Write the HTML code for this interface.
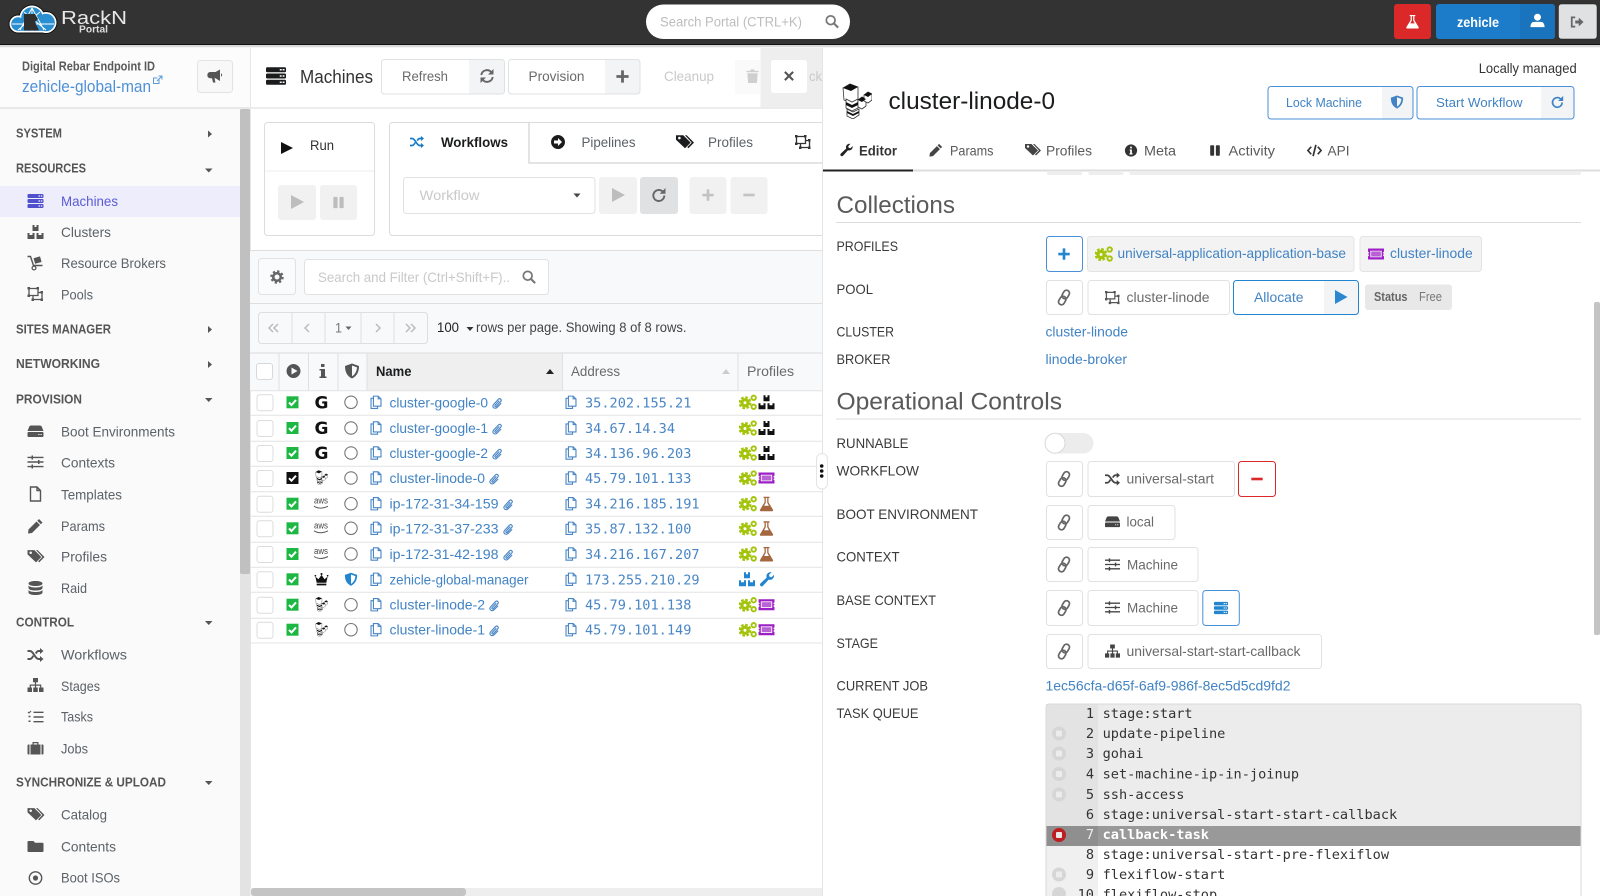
<!DOCTYPE html>
<html lang="en"><head><meta charset="utf-8"><title>RackN Portal - Machines</title>
<style>
html,body{margin:0;padding:0;background:#fff;width:1600px;height:896px;overflow:hidden}
svg{display:block;filter:blur(.3px)}
text{font-family:"Liberation Sans",sans-serif;font-size:14px;fill:#444;white-space:pre}
.h{font-size:13px;font-weight:bold;fill:#555}
.n{fill:#5c6268}
.a{fill:#4183c4}
.g{fill:#6a6a6a}
.p{fill:#c8c8c8}
.l{fill:#3a3a3a}
.m{font-family:"DejaVu Sans Mono",monospace;font-size:13.6px;fill:#333}
.r{font-family:"DejaVu Sans Mono",monospace;font-size:13.6px;fill:#4a86c5}
.t{font-size:24px;fill:#5a5a5a}
.b{fill:#fff;stroke:#e0e1e2;stroke-width:1}
.c{fill:#5a5a5a}
.gg{font-family:"DejaVu Sans",sans-serif;font-weight:bold;font-size:17px;fill:#111}
</style></head><body>
<svg width="1600" height="896" viewBox="0 0 1600 896" xmlns="http://www.w3.org/2000/svg">
<defs>
<symbol id="sv" viewBox="0 0 16 16"><path fill="currentColor" fill-rule="evenodd" d="M1 1h14a1 1 0 0 1 1 1v2a1 1 0 0 1-1 1H1a1 1 0 0 1-1-1V2a1 1 0 0 1 1-1zM11 2.4v1.2h1.5V2.4zM13.3 2.4v1.2h1.5V2.4zM1 6h14a1 1 0 0 1 1 1v2a1 1 0 0 1-1 1H1a1 1 0 0 1-1-1V7a1 1 0 0 1 1-1zM11 7.4v1.2h1.5V7.4zM13.3 7.4v1.2h1.5V7.4zM1 11h14a1 1 0 0 1 1 1v2a1 1 0 0 1-1 1H1a1 1 0 0 1-1-1v-2a1 1 0 0 1 1-1zM11 12.4v1.2h1.5v-1.2zM13.3 12.4v1.2h1.5v-1.2z"/></symbol>
<symbol id="cu" viewBox="0 0 16 16"><path fill="currentColor" d="M5 1h2v2h2V1h2v6H5zM0 9h2v2h3V9h2v6H0zM9 9h2v2h3V9h2v6H9z"/></symbol>
<symbol id="cart" viewBox="0 0 16 16"><path d="M0 1.5h3l3 9h9" fill="none" stroke="currentColor" stroke-width="1.4"/><path fill="currentColor" d="M6 3.2l6.5-1.8 1.6 5.6-6.5 1.8z"/><circle cx="6.5" cy="13" r="1.9" fill="none" stroke="currentColor" stroke-width="1.3"/></symbol>
<symbol id="ung" viewBox="0 0 16 16"><path d="M1.5 2.5h9v7h-9zM5.5 9.5v4h9v-7h-4" fill="none" stroke="currentColor" stroke-width="1.3"/><path fill="currentColor" d="M0 1h2.5v2.5H0zM9 1h2.500v2.500H9zM0 8.500h2.500V11H0zM13 5h2.500v2.500H13zM13 12.500h2.500V15H13zM4 12.500h2.500V15H4z"/></symbol>
<symbol id="hdd" viewBox="0 0 16 16"><path fill="currentColor" fill-rule="evenodd" d="M3.500 2.500h9c.8 0 1.500.5 1.800 1.200L16 8H0l1.700-4.300C2 3 2.700 2.500 3.500 2.500zM1 9h14a1 1 0 0 1 1 1v3a1 1 0 0 1-1 1H1a1 1 0 0 1-1-1v-3a1 1 0 0 1 1-1zM10.800 11v1h1.200v-1zM13 11v1h1.200v-1z"/></symbol>
<symbol id="sl" viewBox="0 0 16 16"><path fill="currentColor" d="M0 2.700h16v1.400H0zM0 7.300h16v1.400H0zM0 11.900h16v1.400H0zM4 1.500h1.500v4H4zM10.500 6H12v4h-1.500zM4 10.500h1.500v4H4z"/></symbol>
<symbol id="file" viewBox="0 0 16 16"><path d="M3 1h6.500L13 4.500V15H3zM9.500 1v3.500H13" fill="none" stroke="currentColor" stroke-width="1.400"/></symbol>
<symbol id="pen" viewBox="0 0 16 16"><path fill="currentColor" d="M11.500 1l3.500 3.500-1.700 1.700-3.500-3.500zM9 3.500L12.500 7l-8 8-4 .5L1 11.500z"/></symbol>
<symbol id="tags" viewBox="0 0 16 16"><path fill="currentColor" fill-rule="evenodd" d="M0 2h6.500L13 8.500 8 13.500 0 6zM3 3.300a1.200 1.200 0 1 0 .01 0zM8 2h1.500L16 8.500 11 13.500 10 12.500l4-4z"/></symbol>
<symbol id="db" viewBox="0 0 16 16"><path fill="currentColor" d="M8 1c4 0 7 1 7 2.500S12 6 8 6 1 5 1 3.500 4 1 8 1zM1 5.500c1 1.500 4 2 7 2s6-.5 7-2V8c0 1.500-3 2.500-7 2.500S1 9.500 1 8zM1 10c1 1.500 4 2 7 2s6-.5 7-2v2.500C15 14 12 15 8 15s-7-1-7-2.500z"/></symbol>
<symbol id="rand" viewBox="0 0 16 16"><path d="M0 4h2.500c3.500 0 5 8 8.500 8h2M0 12h2.500c1.500 0 2.500-1.700 3.300-3.300M8.300 6.500C9 5.200 9.800 4 11 4h2" fill="none" stroke="currentColor" stroke-width="1.900"/><path fill="currentColor" d="M12.500 1L16 4l-3.500 3zM12.500 9l3.500 3-3.500 3z"/></symbol>
<symbol id="site" viewBox="0 0 16 16"><path fill="currentColor" d="M5.500 1h5v4.300h-5zM0 10.500h4.500V15H0zM5.750 10.500h4.500V15h-4.500zM11.500 10.500H16V15h-4.500zM7.400 5h1.200v2.500h5.200v3h-1.200V8.700H8.600v1.800H7.400V8.700H3.400v1.800H2.200v-3h5.200z"/></symbol>
<symbol id="tasks" viewBox="0 0 16 16"><path fill="currentColor" d="M6 2.600h10V4H6zM6 7.300h10v1.400H6zM6 12h10v1.400H6zM1 11.500h2V13H1zM1 6.800h2v1.500H1z"/><path d="M.5 3l1 1L3.500 2" fill="none" stroke="currentColor" stroke-width="1.100"/></symbol>
<symbol id="suit" viewBox="0 0 16 16"><path fill="currentColor" d="M0 5.500a1 1 0 0 1 1-1h1v10H1a1 1 0 0 1-1-1zM3 4.500h10v10H3zM14 4.500h1a1 1 0 0 1 1 1v8a1 1 0 0 1-1 1h-1zM5 2h6v2.500H9.800V3.200H6.200v1.300H5z"/></symbol>
<symbol id="fold" viewBox="0 0 16 16"><path fill="currentColor" d="M1 3h5l1.500 1.800H15a1 1 0 0 1 1 1V13a1 1 0 0 1-1 1H1a1 1 0 0 1-1-1V4a1 1 0 0 1 1-1z"/></symbol>
<symbol id="dot" viewBox="0 0 16 16"><circle cx="8" cy="8" r="6.200" fill="none" stroke="currentColor" stroke-width="1.400"/><circle cx="8" cy="8" r="2.600" fill="currentColor"/></symbol>
<symbol id="horn" viewBox="0 0 16 16"><path fill="currentColor" d="M13 1.500v11.500L8.500 10.300H7.500L8.500 14.500H6L5 10.300H3A3.200 3.200 0 0 1 3 4h5.500zM14 5.200a2 2 0 0 1 0 3.600z"/></symbol>
<symbol id="sync" viewBox="0 0 16 16"><path d="M2.300 7a5.700 5.700 0 0 1 10-2.800M13.700 9a5.700 5.700 0 0 1-10 2.800" fill="none" stroke="currentColor" stroke-width="1.900"/><path fill="currentColor" d="M14.500 1v5.500H9zM1.500 15V9.500H7z"/></symbol>
<symbol id="plus" viewBox="0 0 16 16"><path fill="currentColor" d="M6.500 1.500h3v5h5v3h-5v5h-3v-5h-5v-3h5z"/></symbol>
<symbol id="min" viewBox="0 0 16 16"><path fill="currentColor" d="M1.500 6.500h13v3h-13z"/></symbol>
<symbol id="x" viewBox="0 0 16 16"><path fill="currentColor" d="M3.500 1.500L8 6l4.500-4.500 2 2L10 8l4.500 4.500-2 2L8 10l-4.500 4.500-2-2L6 8 1.500 3.500z"/></symbol>
<symbol id="play" viewBox="0 0 16 16"><path fill="currentColor" d="M2 1l13 7-13 7z"/></symbol>
<symbol id="pause" viewBox="0 0 16 16"><rect x="2.500" y="2" width="4.500" height="12" rx="1" fill="currentColor"/><rect x="9" y="2" width="4.500" height="12" rx="1" fill="currentColor"/></symbol>
<symbol id="redo" viewBox="0 0 16 16"><path d="M13.300 8.500a5.500 5.500 0 1 1-1.600-3.900" fill="none" stroke="currentColor" stroke-width="1.900"/><path fill="currentColor" d="M14.500 1v5.800H8.700z"/></symbol>
<symbol id="trash" viewBox="0 0 16 16"><path fill="currentColor" d="M1.500 2.500h4L6.200 1h3.600l.7 1.500h4V4h-13zM2.500 5h11l-.8 10.500H3.300z"/></symbol>
<symbol id="gear" viewBox="0 0 16 16"><circle cx="8" cy="8" r="4.300" fill="none" stroke="currentColor" stroke-width="3"/><circle cx="8" cy="8" r="6.600" fill="none" stroke="currentColor" stroke-width="2.200" stroke-dasharray="2.600 2.580"/></symbol>
<symbol id="sea" viewBox="0 0 16 16"><circle cx="6.500" cy="6.500" r="5" fill="none" stroke="currentColor" stroke-width="2"/><path d="M10 10l5 5" stroke="currentColor" stroke-width="2.400"/></symbol>
<symbol id="cogs" viewBox="0 0 18 16"><circle cx="6" cy="8.500" r="3.100" fill="none" stroke="currentColor" stroke-width="3.200"/><circle cx="6" cy="8.500" r="5.500" fill="none" stroke="currentColor" stroke-width="2" stroke-dasharray="2.700 1.620"/><circle cx="14.700" cy="3.500" r="2.200" fill="none" stroke="currentColor" stroke-width="1.900"/><circle cx="14.700" cy="12.500" r="2.200" fill="none" stroke="currentColor" stroke-width="1.900"/></symbol>
<symbol id="tick" viewBox="0 0 16 16"><path fill="currentColor" fill-rule="evenodd" d="M0 2.500h16v3.200a1 1 0 0 0 0 2v.6a1 1 0 0 0 0 2v3.200H0v-3.200a1 1 0 0 0 0-2v-.6a1 1 0 0 0 0-2zM2.300 4.700v6.600h11.400V4.700z"/><rect x="3.200" y="5.500" width="9.600" height="5" fill="currentColor" opacity=".7"/></symbol>
<symbol id="fl" viewBox="0 0 16 16"><path fill="currentColor" fill-rule="evenodd" d="M5 1h6v1.300h-1v4.200L14.500 14a1 1 0 0 1-.9 1.500H2.400a1 1 0 0 1-.9-1.500L6 6.500V2.300H5zM7.300 2.300v4.600L5.600 10h4.800L8.700 6.900V2.300z"/></symbol>
<symbol id="wr" viewBox="0 0 16 16"><path fill="currentColor" d="M15 4.500a4 4 0 0 1-5.300 3.800L4 14.500a1.700 1.700 0 0 1-2.500-2.400L7.700 6.300A4 4 0 0 1 12.500 1L10 3.500l.5 2 2 .5L15 3.500z"/></symbol>
<symbol id="clip" viewBox="0 0 16 16"><path d="M11 4.500L5.500 10.500c-1 1.200.5 2.500 1.500 1.500L13 5.500c2-2.200-1-5-3-3L3.500 9.500c-3 3.200 1.500 7 4.500 4L13.500 8" fill="none" stroke="currentColor" stroke-width="1.500"/></symbol>
<symbol id="copy" viewBox="0 0 14 16"><path d="M4 3.300H1.200v11.900H8.800v-2.600M4 .8h5.500L12.800 4v8.600H4zM9.500 .8V4h3.300" fill="none" stroke="currentColor" stroke-width="1.300"/></symbol>
<symbol id="link" viewBox="0 0 16 16"><g transform="rotate(-60 8 8)" fill="none" stroke="currentColor" stroke-width="1.600"><rect x="0.500" y="5.200" width="8.500" height="5.600" rx="2.800"/><rect x="7" y="5.200" width="8.500" height="5.600" rx="2.800"/></g></symbol>
<symbol id="shi" viewBox="0 0 16 16"><path fill="currentColor" fill-rule="evenodd" d="M8 .5L15 3c0 6-2 10-7 12.500C3 13 1 9 1 3zM8 2.500v10.800c3.300-2 4.700-5 5-8.900z"/></symbol>
<symbol id="inf" viewBox="0 0 16 16"><path fill="currentColor" fill-rule="evenodd" d="M8 1a7 7 0 1 0 .01 0zM7 3.500h2v2H7zM6.500 6.800H9v4.400h.8v1.300H6.300v-1.300H7V8.100h-.5z"/></symbol>
<symbol id="i" viewBox="0 0 16 16"><path fill="currentColor" d="M6 1h3.500v3H6zM4.500 6H10v7.500h1.500V15h-7v-1.500H6V7.500H4.500z"/></symbol>
<symbol id="code" viewBox="0 0 16 16"><path d="M4.500 4L1 8l3.500 4M11.500 4L15 8l-3.500 4M9.500 2L6.500 14" fill="none" stroke="currentColor" stroke-width="1.800"/></symbol>
<symbol id="usr" viewBox="0 0 16 16"><circle cx="8" cy="4.500" r="3.700" fill="currentColor"/><path fill="currentColor" d="M.5 15c0-4 2-5.500 4-5.500h7c2 0 4 1.500 4 5.500z"/></symbol>
<symbol id="out" viewBox="0 0 16 16"><path d="M6 2.700H2v10.600h4" fill="none" stroke="currentColor" stroke-width="2"/><path fill="currentColor" d="M6 6.300h4V3l5.500 5-5.500 5V9.700H6z"/></symbol>
<symbol id="pc" viewBox="0 0 16 16"><path fill="currentColor" fill-rule="evenodd" d="M8 1a7 7 0 1 0 .01 0zM6 4.500L12 8l-6 3.500z"/></symbol>
<symbol id="arr" viewBox="0 0 16 16"><path fill="currentColor" fill-rule="evenodd" d="M8 1a7 7 0 1 0 .01 0zM8 4l4 4-4 4V9.500H4v-3h4z"/></symbol>
<symbol id="crn" viewBox="0 0 16 16"><path fill="currentColor" d="M1 5l3.500 3L8 3l3.500 5L15 5l-1.500 7h-11zM2.500 13h11v2h-11z"/><circle cx="8" cy="2" r="1.200" fill="currentColor"/><circle cx="1" cy="4" r="1" fill="currentColor"/><circle cx="15" cy="4" r="1" fill="currentColor"/></symbol>
<symbol id="cb" viewBox="0 0 12 12"><path d="M2.500 6.200l2.500 2.500 4.500-5" fill="none" stroke="#fff" stroke-width="2"/></symbol>
<symbol id="cube" viewBox="0 0 30 36"><g fill="#fff" stroke="#333" stroke-width=".8"><path d="M1 5L8 1l8 3v12l-7 4-7-3z"/><path d="M4 16l6 3 6-3v9l-6 3-6-3z"/><path d="M5 26l6 3 6-3v6l-6 4-6-3z"/><path d="M16 17l4-3 4 2v7l-4 3-4-2z"/><path d="M22 12l4-3 4 2v6l-4 3-4-2z"/></g><path fill="#111" d="M1 5L8 1l8 3-7 4zM4 19l6 3 6-3v3l-6 3-6-3zM5 28l6 3 6-3v2l-6 3-6-3zM16 17l4-3 4 2-4 3zM22 12l4-3 4 2-4 3z"/></symbol>
<clipPath id="mc"><rect x="250" y="47" width="572" height="849"/></clipPath>
<clipPath id="cq"><rect x="1046" y="704" width="535" height="192"/></clipPath>
</defs>

<!-- page -->
<rect width="1600" height="896" fill="#fff"/>

<!-- sidebar -->
<rect x="0" y="44" width="250" height="852" fill="#fafafa"/>
<rect x="0" y="47" width="250" height="60" fill="#fcfcfc"/>
<rect x="0" y="107" width="250" height="2" fill="#e8e8e8"/>
<rect x="240" y="109" width="10" height="787" fill="#e3e3e3"/>
<rect x="240" y="109" width="10" height="465" rx="2" fill="#c0c0c0"/>
<text x="22" y="70.500" style="font-size:13px;font-weight:bold;fill:#5a5a5a" textLength="133" lengthAdjust="spacingAndGlyphs">Digital Rebar Endpoint ID</text>
<text x="22" y="92" class="a" style="font-size:17px;fill:#4f8fd6" textLength="129" lengthAdjust="spacingAndGlyphs">zehicle-global-man</text>
<g fill="none" stroke="#5b9bdc" stroke-width="1"><path d="M159 79.500v4h-5.500v-5.500h4"/><path d="M157 81l4.500-4.500M158.500 76h3.500v3.500"/></g>
<rect x="197.500" y="60.500" width="35" height="32" rx="3" fill="#f8f8f8" stroke="#e3e3e3"/>
<use href="#horn" x="207" y="68" width="16" height="16" color="#555"/>

<text class="h" x="16" y="137.500" textLength="46" lengthAdjust="spacingAndGlyphs">SYSTEM</text>
<path d="M208 130.500l4 3.500-4 3.500z" fill="#555"/>
<text class="h" x="16" y="172.500" textLength="70" lengthAdjust="spacingAndGlyphs">RESOURCES</text>
<path d="M205 168.500h7.500l-3.750 4z" fill="#555"/>
<rect x="0" y="186" width="240" height="31" fill="#eeedfb"/>
<use href="#sv" x="27.500" y="193" width="16" height="16" color="#5050cc"/>
<text x="61" y="206" style="fill:#5a5ad6" textLength="57" lengthAdjust="spacingAndGlyphs">Machines</text>
<use href="#cu" x="27.500" y="224" width="16" height="16" color="#555"/>
<text class="n" x="61" y="237" textLength="50" lengthAdjust="spacingAndGlyphs">Clusters</text>
<use href="#cart" x="27.500" y="255" width="16" height="16" color="#555"/>
<text class="n" x="61" y="268" textLength="105" lengthAdjust="spacingAndGlyphs">Resource Brokers</text>
<use href="#ung" x="27.500" y="286" width="16" height="16" color="#555"/>
<text class="n" x="61" y="299.300" textLength="32" lengthAdjust="spacingAndGlyphs">Pools</text>
<text class="h" x="16" y="333.500" textLength="95" lengthAdjust="spacingAndGlyphs">SITES MANAGER</text>
<path d="M208 326l4 3.500-4 3.500z" fill="#555"/>
<text class="h" x="16" y="368" textLength="84" lengthAdjust="spacingAndGlyphs">NETWORKING</text>
<path d="M208 361l4 3.500-4 3.500z" fill="#555"/>
<text class="h" x="16" y="403.500" textLength="66" lengthAdjust="spacingAndGlyphs">PROVISION</text>
<path d="M205 398h7.500l-3.750 4z" fill="#555"/>
<use href="#hdd" x="27.500" y="423" width="16" height="16" color="#555"/>
<text class="n" x="61" y="436.300" textLength="114" lengthAdjust="spacingAndGlyphs">Boot Environments</text>
<use href="#sl" x="27.500" y="454" width="16" height="16" color="#555"/>
<text class="n" x="61" y="467.300" textLength="54" lengthAdjust="spacingAndGlyphs">Contexts</text>
<use href="#file" x="27.500" y="486" width="16" height="16" color="#555"/>
<text class="n" x="61" y="499.300" textLength="61" lengthAdjust="spacingAndGlyphs">Templates</text>
<use href="#pen" x="27.500" y="518" width="16" height="16" color="#555"/>
<text class="n" x="61" y="531" textLength="44" lengthAdjust="spacingAndGlyphs">Params</text>
<use href="#tags" x="27.500" y="548" width="17" height="17" color="#555"/>
<text class="n" x="61" y="561.300" textLength="46" lengthAdjust="spacingAndGlyphs">Profiles</text>
<use href="#db" x="27.500" y="580" width="16" height="16" color="#555"/>
<text class="n" x="61" y="593" textLength="26" lengthAdjust="spacingAndGlyphs">Raid</text>
<text class="h" x="16" y="626.500" textLength="58" lengthAdjust="spacingAndGlyphs">CONTROL</text>
<path d="M205 621h7.500l-3.750 4z" fill="#555"/>
<use href="#rand" x="27.500" y="647" width="16" height="16" color="#555"/>
<text class="n" x="61" y="659.300" textLength="66" lengthAdjust="spacingAndGlyphs">Workflows</text>
<use href="#site" x="27.500" y="677" width="16" height="16" color="#555"/>
<text class="n" x="61" y="691" textLength="39" lengthAdjust="spacingAndGlyphs">Stages</text>
<use href="#tasks" x="27.500" y="709" width="16" height="16" color="#555"/>
<text class="n" x="61" y="721.300" textLength="32" lengthAdjust="spacingAndGlyphs">Tasks</text>
<use href="#suit" x="27.500" y="740" width="16" height="16" color="#555"/>
<text class="n" x="61" y="753.300" textLength="27" lengthAdjust="spacingAndGlyphs">Jobs</text>
<text class="h" x="16" y="786.500" textLength="150" lengthAdjust="spacingAndGlyphs">SYNCHRONIZE &amp; UPLOAD</text>
<path d="M205 781h7.500l-3.750 4z" fill="#555"/>
<use href="#tags" x="27.500" y="806" width="17" height="17" color="#555"/>
<text class="n" x="61" y="819.300" textLength="46" lengthAdjust="spacingAndGlyphs">Catalog</text>
<use href="#fold" x="27.500" y="838" width="16" height="16" color="#555"/>
<text class="n" x="61" y="851.300" textLength="55" lengthAdjust="spacingAndGlyphs">Contents</text>
<use href="#dot" x="27.500" y="870" width="16" height="16" color="#555"/>
<text class="n" x="61" y="882.300" textLength="59" lengthAdjust="spacingAndGlyphs">Boot ISOs</text>

<!-- main panel -->
<g clip-path="url(#mc)">
<rect x="250" y="47" width="572" height="849" fill="#fff"/>
<rect x="250" y="47" width="1" height="849" fill="#e6e6e6"/>
<rect x="250" y="107" width="572" height="2" fill="#ececec"/>
<use href="#sv" x="266" y="66" width="20" height="20" color="#1b1c1d"/>
<text x="300" y="83" style="font-size:18px;fill:#333" textLength="73" lengthAdjust="spacingAndGlyphs">Machines</text>
<path d="M469 60h32.500a2.500 2.500 0 0 1 2.500 2.500v29a2.500 2.500 0 0 1-2.500 2.500H469z" fill="#f3f4f5"/>
<rect x="381.500" y="59.500" width="123" height="34.500" rx="3" fill="none" stroke="#e0e1e2"/>
<text class="g" x="402" y="81" textLength="46" lengthAdjust="spacingAndGlyphs">Refresh</text>
<use href="#sync" x="479" y="68" width="16" height="16" color="#666"/>
<path d="M605 60h32.500a2.500 2.500 0 0 1 2.500 2.500v29a2.500 2.500 0 0 1-2.500 2.500H605z" fill="#f3f4f5"/>
<rect x="508.500" y="59.500" width="131.500" height="34.500" rx="3" fill="none" stroke="#e0e1e2"/>
<text class="g" x="528.500" y="81" textLength="56" lengthAdjust="spacingAndGlyphs">Provision</text>
<use href="#plus" x="615" y="69" width="15" height="15" color="#666"/>
<text x="664" y="81" style="fill:#c9c9c9" textLength="50" lengthAdjust="spacingAndGlyphs">Cleanup</text>
<rect x="735" y="60" width="25" height="34" fill="#fafafa"/>
<use href="#trash" x="745" y="68" width="15" height="16" color="#cfcfcf"/>
<rect x="760.500" y="47" width="61.500" height="60" fill="#eeeeee"/>
<rect x="771" y="60" width="36" height="33" rx="3" fill="#fff"/>
<use href="#x" x="783" y="70" width="12" height="12" color="#555"/>
<text x="809" y="81" style="fill:#c9c9c9" textLength="13" lengthAdjust="spacingAndGlyphs">ck</text>

<!-- run card -->
<rect x="264.500" y="122.500" width="110" height="113" rx="3" fill="#fff" stroke="#dcdcdc"/>
<path d="M265 171h109" stroke="#eee"/>
<path d="M281 142l12 6-12 6z" fill="#111"/>
<text x="310" y="150" style="fill:#333" textLength="24" lengthAdjust="spacingAndGlyphs">Run</text>
<rect x="278" y="185" width="38" height="35" rx="3" fill="#f1f1f1"/>
<use href="#play" x="289" y="194" width="16" height="16" color="#bdbdbd"/>
<rect x="320" y="185" width="37" height="35" rx="3" fill="#f1f1f1"/>
<use href="#pause" x="331" y="195" width="15" height="15" color="#bdbdbd"/>

<!-- tabs card -->
<rect x="389.500" y="122.500" width="460" height="113" rx="3" fill="#fff" stroke="#dcdcdc"/>
<path d="M529 122.500V163H822" fill="none" stroke="#dcdcdc" stroke-width="1.500"/>
<use href="#rand" x="410" y="135" width="14" height="14" color="#1a7cc9"/>
<text x="441" y="147.200" style="font-weight:bold;fill:#1b1c1d" textLength="67" lengthAdjust="spacingAndGlyphs">Workflows</text>
<use href="#arr" x="550" y="134" width="16" height="16" color="#1b1c1d"/>
<text class="n" x="581.500" y="147.200" textLength="54" lengthAdjust="spacingAndGlyphs">Pipelines</text>
<use href="#tags" x="676" y="133" width="18" height="18" color="#1b1c1d"/>
<text class="n" x="708" y="147.200" textLength="45" lengthAdjust="spacingAndGlyphs">Profiles</text>
<use href="#ung" x="795" y="134" width="16" height="16" color="#333"/>
<rect x="403.500" y="177.500" width="191.500" height="36" rx="3" fill="#fff" stroke="#e0e1e2"/>
<text x="419.500" y="200" style="fill:#c9c9c9" textLength="60" lengthAdjust="spacingAndGlyphs">Workflow</text>
<path d="M573.500 193.500h7l-3.500 4z" fill="#444"/>
<rect x="599" y="177" width="38" height="37" rx="3" fill="#f1f1f1"/>
<use href="#play" x="610" y="187" width="16" height="16" color="#bdbdbd"/>
<rect x="640" y="177" width="38" height="37" rx="3" fill="#e0e1e2"/>
<use href="#redo" x="651" y="187" width="16" height="16" color="#666"/>
<rect x="689.500" y="177" width="37" height="37" rx="3" fill="#f1f1f1"/>
<use href="#plus" x="701" y="188" width="14" height="14" color="#c3c3c3"/>
<rect x="730.500" y="177" width="37" height="37" rx="3" fill="#f1f1f1"/>
<use href="#min" x="742" y="188" width="14" height="14" color="#c3c3c3"/>

<!-- filter -->
<rect x="250" y="250" width="572" height="103" fill="#f8f9fb"/>
<rect x="250" y="250" width="572" height="1" fill="#dedede"/>
<rect x="250" y="303" width="572" height="1" fill="#dedede"/>
<rect x="258.500" y="258.500" width="37" height="36" rx="3" fill="#fafbfc" stroke="#e0e1e2"/>
<use href="#gear" x="270" y="270" width="14" height="14" color="#666"/>
<rect x="304.500" y="259.500" width="244" height="35" rx="3" fill="#fff" stroke="#e0e1e2"/>
<text x="318" y="282" style="fill:#c9c9c9" textLength="192" lengthAdjust="spacingAndGlyphs">Search and Filter (Ctrl+Shift+F)..</text>
<use href="#sea" x="522" y="270" width="14" height="14" color="#777"/>
<rect x="258.500" y="312.500" width="169" height="31" rx="3" fill="#f8f9fb" stroke="#dedede"/>
<path d="M292 313v30M325 313v30M361 313v30M394 313v30" stroke="#dedede"/>
<path d="M274 324l-4 4 4 4M279 324l-4 4 4 4M310 324l-4 4 4 4M377 324l4 4-4 4M407 324l4 4-4 4M412 324l4 4-4 4" fill="none" stroke="#bbb" stroke-width="1.500" transform="translate(-1 0)"/>
<text x="335" y="332.500" style="fill:#777" textLength="7" lengthAdjust="spacingAndGlyphs">1</text>
<path d="M345.500 326.500h6l-3 3.500z" fill="#666"/>
<text x="437" y="332.200" style="fill:#222" textLength="22" lengthAdjust="spacingAndGlyphs">100</text>
<path d="M466.500 327h7l-3.500 4z" fill="#333"/>
<text x="476" y="332.200" style="fill:#444" textLength="210.500" lengthAdjust="spacingAndGlyphs">rows per page. Showing 8 of 8 rows.</text>

<!-- table header -->
<rect x="250" y="353" width="572" height="38" fill="#f8f9fb"/>
<rect x="367" y="353" width="195.500" height="38" fill="#efefef"/>
<rect x="250" y="352.500" width="572" height="1" fill="#dcdcdc"/>
<path d="M279 353v38M308.500 353v38M338 353v38M367 353v38M562.500 353v38M738 353v38" stroke="#e0e0e0"/>
<rect x="256.500" y="363.500" width="16" height="16" rx="2.500" fill="#fff" stroke="#d8d8d8"/>
<use href="#pc" x="285.500" y="363" width="16" height="16" color="#555"/>
<use href="#i" x="315" y="363" width="16" height="16" color="#555"/>
<use href="#shi" x="344" y="363" width="16" height="16" color="#555"/>
<text x="376" y="376" style="font-weight:bold;fill:#1b1c1d" textLength="35.500" lengthAdjust="spacingAndGlyphs">Name</text>
<path d="M546 374l4-5 4 5z" fill="#222"/>
<text x="571" y="376" class="g" textLength="49" lengthAdjust="spacingAndGlyphs">Address</text>
<path d="M722 374l4-5 4 5z" fill="#ccc"/>
<text x="747" y="376" class="g" textLength="47" lengthAdjust="spacingAndGlyphs">Profiles</text>
<path d="M250 390.800H822M250 415.300H822M250 441.300H822M250 466.300H822M250 491.700H822M250 516.300H822M250 542.300H822M250 567.300H822M250 592.300H822M250 618.300H822M250 643H822" stroke="#e4e4e4" stroke-width="1"/>

<!-- rows -->
<g transform="translate(0 402.300)">
<rect x="257" y="-7.500" width="16" height="16" rx="2.500" fill="#fff" stroke="#dcdcdc"/><rect x="286.500" y="-6" width="12" height="12" fill="#1db843"/><use href="#cb" x="286.500" y="-6" width="12" height="12"/>
<text class="gg" x="314.500" y="6">G</text><circle cx="351" cy="0" r="6.200" fill="#fff" stroke="#777" stroke-width="1.100"/><use href="#copy" x="370" y="-7" width="12" height="14" color="#4a86c5"/>
<text class="a" x="389.500" y="5" textLength="98.500" lengthAdjust="spacingAndGlyphs">cluster-google-0</text><use href="#clip" x="491" y="-5" width="12" height="12" color="#4a86c5"/>
<use href="#copy" x="565" y="-7" width="12" height="14" color="#4a86c5"/><text class="r" x="585" y="5">35.202.155.21</text>
<use href="#cogs" x="739" y="-8" width="18" height="16" color="#a3c40a"/><use href="#cu" x="758.500" y="-8" width="16" height="16" color="#111"/></g>

<g transform="translate(0 428)">
<rect x="257" y="-7.500" width="16" height="16" rx="2.500" fill="#fff" stroke="#dcdcdc"/><rect x="286.500" y="-6" width="12" height="12" fill="#1db843"/><use href="#cb" x="286.500" y="-6" width="12" height="12"/>
<text class="gg" x="314.500" y="6">G</text><circle cx="351" cy="0" r="6.200" fill="#fff" stroke="#777" stroke-width="1.100"/><use href="#copy" x="370" y="-7" width="12" height="14" color="#4a86c5"/>
<text class="a" x="389.500" y="5" textLength="98.500" lengthAdjust="spacingAndGlyphs">cluster-google-1</text><use href="#clip" x="491" y="-5" width="12" height="12" color="#4a86c5"/>
<use href="#copy" x="565" y="-7" width="12" height="14" color="#4a86c5"/><text class="r" x="585" y="5">34.67.14.34</text>
<use href="#cogs" x="739" y="-8" width="18" height="16" color="#a3c40a"/><use href="#cu" x="758.500" y="-8" width="16" height="16" color="#111"/></g>

<g transform="translate(0 453)">
<rect x="257" y="-7.500" width="16" height="16" rx="2.500" fill="#fff" stroke="#dcdcdc"/><rect x="286.500" y="-6" width="12" height="12" fill="#1db843"/><use href="#cb" x="286.500" y="-6" width="12" height="12"/>
<text class="gg" x="314.500" y="6">G</text><circle cx="351" cy="0" r="6.200" fill="#fff" stroke="#777" stroke-width="1.100"/><use href="#copy" x="370" y="-7" width="12" height="14" color="#4a86c5"/>
<text class="a" x="389.500" y="5" textLength="98.500" lengthAdjust="spacingAndGlyphs">cluster-google-2</text><use href="#clip" x="491" y="-5" width="12" height="12" color="#4a86c5"/>
<use href="#copy" x="565" y="-7" width="12" height="14" color="#4a86c5"/><text class="r" x="585" y="5">34.136.96.203</text>
<use href="#cogs" x="739" y="-8" width="18" height="16" color="#a3c40a"/><use href="#cu" x="758.500" y="-8" width="16" height="16" color="#111"/></g>

<g transform="translate(0 478)">
<rect x="257" y="-7.500" width="16" height="16" rx="2.500" fill="#fff" stroke="#dcdcdc"/><rect x="286.500" y="-6" width="12" height="12" fill="#111"/><use href="#cb" x="286.500" y="-6" width="12" height="12"/>
<use href="#cube" x="315" y="-8" width="13" height="15"/><circle cx="351" cy="0" r="6.200" fill="#fff" stroke="#777" stroke-width="1.100"/><use href="#copy" x="370" y="-7" width="12" height="14" color="#4a86c5"/>
<text class="a" x="389.500" y="5" textLength="95.500" lengthAdjust="spacingAndGlyphs">cluster-linode-0</text><use href="#clip" x="488" y="-5" width="12" height="12" color="#4a86c5"/>
<use href="#copy" x="565" y="-7" width="12" height="14" color="#4a86c5"/><text class="r" x="585" y="5">45.79.101.133</text>
<use href="#cogs" x="739" y="-8" width="18" height="16" color="#a3c40a"/><use href="#tick" x="758.500" y="-8" width="16" height="16" color="#9b1fc4"/></g>

<g transform="translate(0 503.700)">
<rect x="257" y="-7.500" width="16" height="16" rx="2.500" fill="#fff" stroke="#dcdcdc"/><rect x="286.500" y="-6" width="12" height="12" fill="#1db843"/><use href="#cb" x="286.500" y="-6" width="12" height="12"/>
<text x="314" y="0" style="font-size:9px;fill:#444" textLength="14" lengthAdjust="spacingAndGlyphs">aws</text><path d="M314 2.500c4 2.500 9 2.500 14 0" fill="none" stroke="#555" stroke-width="1"/><circle cx="351" cy="0" r="6.200" fill="#fff" stroke="#777" stroke-width="1.100"/><use href="#copy" x="370" y="-7" width="12" height="14" color="#4a86c5"/>
<text class="a" x="389.500" y="5" textLength="109" lengthAdjust="spacingAndGlyphs">ip-172-31-34-159</text><use href="#clip" x="502" y="-5" width="12" height="12" color="#4a86c5"/>
<use href="#copy" x="565" y="-7" width="12" height="14" color="#4a86c5"/><text class="r" x="585" y="5">34.216.185.191</text>
<use href="#cogs" x="739" y="-8" width="18" height="16" color="#a3c40a"/><use href="#fl" x="758.500" y="-8" width="16" height="16" color="#a5673f"/></g>

<g transform="translate(0 528.300)">
<rect x="257" y="-7.500" width="16" height="16" rx="2.500" fill="#fff" stroke="#dcdcdc"/><rect x="286.500" y="-6" width="12" height="12" fill="#1db843"/><use href="#cb" x="286.500" y="-6" width="12" height="12"/>
<text x="314" y="0" style="font-size:9px;fill:#444" textLength="14" lengthAdjust="spacingAndGlyphs">aws</text><path d="M314 2.500c4 2.500 9 2.500 14 0" fill="none" stroke="#555" stroke-width="1"/><circle cx="351" cy="0" r="6.200" fill="#fff" stroke="#777" stroke-width="1.100"/><use href="#copy" x="370" y="-7" width="12" height="14" color="#4a86c5"/>
<text class="a" x="389.500" y="5" textLength="109" lengthAdjust="spacingAndGlyphs">ip-172-31-37-233</text><use href="#clip" x="502" y="-5" width="12" height="12" color="#4a86c5"/>
<use href="#copy" x="565" y="-7" width="12" height="14" color="#4a86c5"/><text class="r" x="585" y="5">35.87.132.100</text>
<use href="#cogs" x="739" y="-8" width="18" height="16" color="#a3c40a"/><use href="#fl" x="758.500" y="-8" width="16" height="16" color="#a5673f"/></g>

<g transform="translate(0 554)">
<rect x="257" y="-7.500" width="16" height="16" rx="2.500" fill="#fff" stroke="#dcdcdc"/><rect x="286.500" y="-6" width="12" height="12" fill="#1db843"/><use href="#cb" x="286.500" y="-6" width="12" height="12"/>
<text x="314" y="0" style="font-size:9px;fill:#444" textLength="14" lengthAdjust="spacingAndGlyphs">aws</text><path d="M314 2.500c4 2.500 9 2.500 14 0" fill="none" stroke="#555" stroke-width="1"/><circle cx="351" cy="0" r="6.200" fill="#fff" stroke="#777" stroke-width="1.100"/><use href="#copy" x="370" y="-7" width="12" height="14" color="#4a86c5"/>
<text class="a" x="389.500" y="5" textLength="109" lengthAdjust="spacingAndGlyphs">ip-172-31-42-198</text><use href="#clip" x="502" y="-5" width="12" height="12" color="#4a86c5"/>
<use href="#copy" x="565" y="-7" width="12" height="14" color="#4a86c5"/><text class="r" x="585" y="5">34.216.167.207</text>
<use href="#cogs" x="739" y="-8" width="18" height="16" color="#a3c40a"/><use href="#fl" x="758.500" y="-8" width="16" height="16" color="#a5673f"/></g>

<g transform="translate(0 579.300)">
<rect x="257" y="-7.500" width="16" height="16" rx="2.500" fill="#fff" stroke="#dcdcdc"/><rect x="286.500" y="-6" width="12" height="12" fill="#1db843"/><use href="#cb" x="286.500" y="-6" width="12" height="12"/>
<use href="#crn" x="314.500" y="-7" width="14" height="14" color="#111"/><use href="#shi" x="344" y="-7" width="14" height="14" color="#2185d0"/><use href="#copy" x="370" y="-7" width="12" height="14" color="#4a86c5"/>
<text class="a" x="389.500" y="5" textLength="139" lengthAdjust="spacingAndGlyphs">zehicle-global-manager</text>
<use href="#copy" x="565" y="-7" width="12" height="14" color="#4a86c5"/><text class="r" x="585" y="5">173.255.210.29</text>
<use href="#cu" x="739" y="-8" width="16" height="16" color="#2185d0"/><use href="#wr" x="759" y="-8" width="16" height="16" color="#2185d0"/></g>

<g transform="translate(0 604.700)">
<rect x="257" y="-7.500" width="16" height="16" rx="2.500" fill="#fff" stroke="#dcdcdc"/><rect x="286.500" y="-6" width="12" height="12" fill="#1db843"/><use href="#cb" x="286.500" y="-6" width="12" height="12"/>
<use href="#cube" x="315" y="-8" width="13" height="15"/><circle cx="351" cy="0" r="6.200" fill="#fff" stroke="#777" stroke-width="1.100"/><use href="#copy" x="370" y="-7" width="12" height="14" color="#4a86c5"/>
<text class="a" x="389.500" y="5" textLength="95.500" lengthAdjust="spacingAndGlyphs">cluster-linode-2</text><use href="#clip" x="488" y="-5" width="12" height="12" color="#4a86c5"/>
<use href="#copy" x="565" y="-7" width="12" height="14" color="#4a86c5"/><text class="r" x="585" y="5">45.79.101.138</text>
<use href="#cogs" x="739" y="-8" width="18" height="16" color="#a3c40a"/><use href="#tick" x="758.500" y="-8" width="16" height="16" color="#9b1fc4"/></g>

<g transform="translate(0 629.700)">
<rect x="257" y="-7.500" width="16" height="16" rx="2.500" fill="#fff" stroke="#dcdcdc"/><rect x="286.500" y="-6" width="12" height="12" fill="#1db843"/><use href="#cb" x="286.500" y="-6" width="12" height="12"/>
<use href="#cube" x="315" y="-8" width="13" height="15"/><circle cx="351" cy="0" r="6.200" fill="#fff" stroke="#777" stroke-width="1.100"/><use href="#copy" x="370" y="-7" width="12" height="14" color="#4a86c5"/>
<text class="a" x="389.500" y="5" textLength="95.500" lengthAdjust="spacingAndGlyphs">cluster-linode-1</text><use href="#clip" x="488" y="-5" width="12" height="12" color="#4a86c5"/>
<use href="#copy" x="565" y="-7" width="12" height="14" color="#4a86c5"/><text class="r" x="585" y="5">45.79.101.149</text>
<use href="#cogs" x="739" y="-8" width="18" height="16" color="#a3c40a"/><use href="#tick" x="758.500" y="-8" width="16" height="16" color="#9b1fc4"/></g>

<!-- main h-scroll -->
<rect x="250" y="888" width="572" height="8" fill="#eeeeee"/>
<rect x="251" y="888" width="215" height="8" rx="3" fill="#c4c4c4"/>
</g>

<!-- right panel -->
<rect x="822" y="47" width="778" height="849" fill="#fff"/>
<rect x="822" y="47" width="1" height="849" fill="#e4e4e4"/>
<text x="1478.700" y="73" style="fill:#333" textLength="98" lengthAdjust="spacingAndGlyphs">Locally managed</text>
<use href="#cube" x="842" y="83" width="30" height="36"/>
<text x="888.500" y="109" style="font-size:24px;fill:#1b1c1d" textLength="166.500" lengthAdjust="spacingAndGlyphs">cluster-linode-0</text>
<path d="M1382 87h28.500a2.500 2.500 0 0 1 2.500 2.500v27a2.500 2.500 0 0 1-2.500 2.500H1382z" fill="#f3f4f5"/>
<rect x="1268" y="86.500" width="145" height="32.500" rx="3" fill="none" stroke="#4a90d9"/>
<text x="1286" y="107" class="a" style="font-size:13px" textLength="76" lengthAdjust="spacingAndGlyphs">Lock Machine</text>
<use href="#shi" x="1390" y="95" width="14" height="14" color="#4183c4"/>
<path d="M1541 87h30.500a2.500 2.500 0 0 1 2.500 2.500v27a2.500 2.500 0 0 1-2.500 2.500H1541z" fill="#f3f4f5"/>
<rect x="1417" y="86.500" width="157" height="32.500" rx="3" fill="none" stroke="#4a90d9"/>
<text x="1436" y="107" class="a" style="font-size:13px" textLength="86.500" lengthAdjust="spacingAndGlyphs">Start Workflow</text>
<use href="#redo" x="1550.500" y="95" width="14" height="14" color="#4183c4"/>

<use href="#wr" x="839.500" y="143" width="14" height="14" color="#222"/>
<text x="859" y="155.500" style="font-weight:bold;fill:#333" textLength="38" lengthAdjust="spacingAndGlyphs">Editor</text>
<use href="#pen" x="929" y="143" width="14" height="14" color="#444"/>
<text class="c" x="950" y="155.500" textLength="43.500" lengthAdjust="spacingAndGlyphs">Params</text>
<use href="#tags" x="1025" y="142" width="16" height="16" color="#444"/>
<text class="c" x="1046" y="155.500" textLength="46" lengthAdjust="spacingAndGlyphs">Profiles</text>
<use href="#inf" x="1124" y="143.500" width="14" height="14" color="#333"/>
<text class="c" x="1144" y="155.500" textLength="32" lengthAdjust="spacingAndGlyphs">Meta</text>
<use href="#pause" x="1208" y="143.500" width="14" height="14" color="#333"/>
<text class="c" x="1228.500" y="155.500" textLength="46.500" lengthAdjust="spacingAndGlyphs">Activity</text>
<use href="#code" x="1306.500" y="143" width="16" height="15" color="#333"/>
<text class="c" x="1327.500" y="155.500" textLength="22" lengthAdjust="spacingAndGlyphs">API</text>
<rect x="823" y="169.500" width="777" height="2" fill="#dedede"/>
<rect x="823" y="169.500" width="90" height="2" fill="#222"/>
<path d="M1047 172h35v1.500a1.500 1.500 0 0 1-1.500 1.500h-32a1.500 1.500 0 0 1-1.500-1.500zM1088.500 172h35v1.500a1.500 1.500 0 0 1-1.500 1.500h-32a1.500 1.500 0 0 1-1.500-1.500zM1129.500 172h451.500v1.500a1.500 1.500 0 0 1-1.500 1.500h-448.500a1.500 1.500 0 0 1-1.500-1.500z" fill="#eeeeee"/>

<text class="t" x="836.500" y="213" textLength="118.500" lengthAdjust="spacingAndGlyphs">Collections</text>
<rect x="836" y="222" width="745" height="1" fill="#ddd"/>
<text class="l" x="836.500" y="251" textLength="61.500" lengthAdjust="spacingAndGlyphs">PROFILES</text>
<rect x="1046.500" y="236.500" width="36" height="35" rx="3" fill="#fff" stroke="#4a90d9"/>
<use href="#plus" x="1057" y="247" width="14" height="14" color="#2185d0"/>
<rect x="1087.500" y="236.500" width="266.500" height="35" rx="3" fill="#f3f3f3" stroke="#e4e4e4"/>
<use href="#cogs" x="1095" y="246" width="18" height="16" color="#a3c40a"/>
<text class="a" x="1117.500" y="258" textLength="228.500" lengthAdjust="spacingAndGlyphs">universal-application-application-base</text>
<rect x="1360" y="236.500" width="121.500" height="35" rx="3" fill="#f3f3f3" stroke="#e4e4e4"/>
<use href="#tick" x="1368" y="246" width="16" height="16" color="#a020c8"/>
<text class="a" x="1390" y="258" textLength="82.700" lengthAdjust="spacingAndGlyphs">cluster-linode</text>

<text class="l" x="836.500" y="294" textLength="36.500" lengthAdjust="spacingAndGlyphs">POOL</text>
<rect class="b" x="1046.500" y="280.500" width="36" height="34" rx="3"/>
<use href="#link" x="1055.500" y="289" width="17" height="17" color="#666"/>
<rect class="b" x="1088" y="280.500" width="141.500" height="34" rx="3"/>
<use href="#ung" x="1105" y="290" width="15" height="15" color="#555"/>
<text class="g" x="1126.500" y="302" textLength="83" lengthAdjust="spacingAndGlyphs">cluster-linode</text>
<path d="M1324 281h32a2.500 2.500 0 0 1 2.500 2.500v28.500a2.500 2.500 0 0 1-2.500 2.500H1324z" fill="#f3f4f5"/>
<rect x="1233.500" y="280.500" width="125" height="34" rx="3" fill="none" stroke="#2185d0"/>
<text class="a" x="1254" y="302" textLength="49.500" lengthAdjust="spacingAndGlyphs">Allocate</text>
<path d="M1335 290l12.500 7-12.500 7z" fill="#2a87d0"/>
<rect x="1365" y="284.500" width="87" height="25.500" rx="3" fill="#e8e8e8"/>
<text x="1374" y="301" style="font-size:12.500px;font-weight:bold;fill:#666" textLength="33.500" lengthAdjust="spacingAndGlyphs">Status</text>
<text x="1419" y="301" style="font-size:12.500px;fill:#777" textLength="23" lengthAdjust="spacingAndGlyphs">Free</text>

<text class="l" x="836.500" y="336.500" textLength="57.500" lengthAdjust="spacingAndGlyphs">CLUSTER</text>
<text class="a" x="1045.500" y="336.500" textLength="82.500" lengthAdjust="spacingAndGlyphs">cluster-linode</text>
<text class="l" x="836.500" y="364" textLength="54" lengthAdjust="spacingAndGlyphs">BROKER</text>
<text class="a" x="1045.500" y="364" textLength="81.500" lengthAdjust="spacingAndGlyphs">linode-broker</text>

<text class="t" x="836.500" y="409.400" textLength="225.500" lengthAdjust="spacingAndGlyphs">Operational Controls</text>
<rect x="836" y="418.500" width="745" height="1" fill="#ddd"/>

<text class="l" x="836.500" y="448" textLength="72" lengthAdjust="spacingAndGlyphs">RUNNABLE</text>
<rect x="1045" y="433" width="48.500" height="20.500" rx="10.250" fill="#ececec"/>
<circle cx="1055" cy="443.200" r="10" fill="#fff" stroke="#d8d8d8" stroke-width="1"/>

<text class="l" x="836.500" y="475.500" textLength="82.500" lengthAdjust="spacingAndGlyphs">WORKFLOW</text>
<rect class="b" x="1046.500" y="461.500" width="36" height="35" rx="3"/>
<use href="#link" x="1055.500" y="470.500" width="17" height="17" color="#666"/>
<rect class="b" x="1088" y="461.500" width="146.500" height="35" rx="3"/>
<use href="#rand" x="1105" y="471.500" width="15" height="15" color="#444"/>
<text class="g" x="1126.500" y="483.700" textLength="87.500" lengthAdjust="spacingAndGlyphs">universal-start</text>
<rect x="1238.500" y="461.500" width="37" height="35" rx="3" fill="#fff" stroke="#db2828"/>
<use href="#min" x="1250" y="472" width="14" height="14" color="#db2828"/>

<text class="l" x="836.500" y="519" textLength="141.500" lengthAdjust="spacingAndGlyphs">BOOT ENVIRONMENT</text>
<rect class="b" x="1046.500" y="505.500" width="36" height="34" rx="3"/>
<use href="#link" x="1055.500" y="514" width="17" height="17" color="#666"/>
<rect class="b" x="1088" y="505.500" width="87" height="34" rx="3"/>
<use href="#hdd" x="1105" y="514" width="15" height="15" color="#444"/>
<text class="g" x="1126.500" y="526.700" textLength="27.500" lengthAdjust="spacingAndGlyphs">local</text>

<text class="l" x="836.500" y="561.700" textLength="63" lengthAdjust="spacingAndGlyphs">CONTEXT</text>
<rect class="b" x="1046.500" y="547.500" width="36" height="34" rx="3"/>
<use href="#link" x="1055.500" y="556" width="17" height="17" color="#666"/>
<rect class="b" x="1088" y="547.500" width="110" height="34" rx="3"/>
<use href="#sl" x="1105" y="557" width="15" height="15" color="#444"/>
<text class="g" x="1127" y="569.700" textLength="51" lengthAdjust="spacingAndGlyphs">Machine</text>

<text class="l" x="836.500" y="605" textLength="99.500" lengthAdjust="spacingAndGlyphs">BASE CONTEXT</text>
<rect class="b" x="1046.500" y="590.500" width="36" height="35" rx="3"/>
<use href="#link" x="1055.500" y="599.500" width="17" height="17" color="#666"/>
<rect class="b" x="1088" y="590.500" width="110" height="35" rx="3"/>
<use href="#sl" x="1105" y="600" width="15" height="15" color="#444"/>
<text class="g" x="1127" y="612.500" textLength="51" lengthAdjust="spacingAndGlyphs">Machine</text>
<rect x="1202.800" y="590.500" width="36.500" height="35" rx="3" fill="#fff" stroke="#4a90d9"/>
<use href="#sv" x="1214" y="600.500" width="14" height="15" color="#2185d0"/>

<text class="l" x="836.500" y="648" textLength="41.500" lengthAdjust="spacingAndGlyphs">STAGE</text>
<rect class="b" x="1046.500" y="634.500" width="36" height="34" rx="3"/>
<use href="#link" x="1055.500" y="643" width="17" height="17" color="#666"/>
<rect class="b" x="1088" y="634.500" width="233.500" height="34" rx="3"/>
<use href="#site" x="1105" y="643.500" width="15" height="15" color="#444"/>
<text class="g" x="1126.500" y="656" textLength="174" lengthAdjust="spacingAndGlyphs">universal-start-start-callback</text>

<text class="l" x="836.500" y="690.500" textLength="91.500" lengthAdjust="spacingAndGlyphs">CURRENT JOB</text>
<text class="a" x="1045.500" y="690.500" textLength="245" lengthAdjust="spacingAndGlyphs">1ec56cfa-d65f-6af9-986f-8ec5d5cd9fd2</text>

<text class="l" x="836.500" y="718" textLength="82" lengthAdjust="spacingAndGlyphs">TASK QUEUE</text>

<!-- task queue -->
<g clip-path="url(#cq)">
<rect x="1046" y="704" width="535" height="122" fill="#ececec"/>
<rect x="1046" y="704" width="52" height="122" fill="#e3e3e3"/>
<rect x="1046" y="826" width="535" height="20" fill="#999"/>
<rect x="1046" y="826" width="52" height="20" fill="#8f8f8f"/>
<rect x="1046" y="846" width="535" height="50" fill="#fff"/>
<rect x="1046" y="846" width="52" height="50" fill="#f0f0f0"/>
</g>
<path d="M1046 896V707a3 3 0 0 1 3-3h529a3 3 0 0 1 3 3v189" fill="none" stroke="#d8d8d8"/>
<g fill="#d6d6d6">
<circle cx="1059" cy="733.500" r="7"/><circle cx="1059" cy="753.500" r="7"/><circle cx="1059" cy="774" r="7"/><circle cx="1059" cy="794.500" r="7"/><circle cx="1059" cy="874.500" r="7"/><circle cx="1059" cy="894" r="7"/>
</g>
<g fill="#ececec"><rect x="1056" y="730.500" width="6" height="6" rx="1"/><rect x="1056" y="750.500" width="6" height="6" rx="1"/><rect x="1056" y="771" width="6" height="6" rx="1"/><rect x="1056" y="791.500" width="6" height="6" rx="1"/><rect x="1056" y="871.500" width="6" height="6" rx="1"/></g>
<circle cx="1059" cy="835" r="7" fill="#bd1e22"/><rect x="1056" y="832" width="6" height="6" rx="1" fill="#e8e8e8"/>
<g text-anchor="end">
<text class="m" x="1094" y="718">1</text><text class="m" x="1094" y="738">2</text><text class="m" x="1094" y="758">3</text><text class="m" x="1094" y="778.700">4</text><text class="m" x="1094" y="799">5</text><text class="m" x="1094" y="819">6</text><text class="m" x="1094" y="839" style="fill:#eee">7</text><text class="m" x="1094" y="859">8</text><text class="m" x="1094" y="879">9</text><text class="m" x="1094" y="899">10</text>
</g>
<text class="m" x="1102.600" y="718">stage:start</text>
<text class="m" x="1102.600" y="738">update-pipeline</text>
<text class="m" x="1102.600" y="758">gohai</text>
<text class="m" x="1102.600" y="778.700">set-machine-ip-in-joinup</text>
<text class="m" x="1102.600" y="799">ssh-access</text>
<text class="m" x="1102.600" y="819">stage:universal-start-start-callback</text>
<text class="m" x="1102.600" y="839" style="fill:#fff;font-weight:bold">callback-task</text>
<text class="m" x="1102.600" y="859">stage:universal-start-pre-flexiflow</text>
<text class="m" x="1102.600" y="879">flexiflow-start</text>
<text class="m" x="1102.600" y="899">flexiflow-stop</text>

<!-- right scrollbar -->
<rect x="1594" y="302" width="6" height="333" rx="2" fill="#c4c4c4"/>

<!-- dragger -->
<rect x="816.500" y="453.500" width="11" height="35.500" rx="5.500" fill="#fff" stroke="#e4e4e4"/>
<circle cx="821.700" cy="466" r="1.800" fill="#111"/><circle cx="821.700" cy="471" r="1.800" fill="#111"/><circle cx="821.700" cy="476" r="1.800" fill="#111"/>

<!-- header -->
<rect x="0" y="47" width="1600" height="1" fill="#f4f4f4"/>
<rect x="0" y="45" width="1600" height="2" fill="#d8d8d8"/>
<rect x="0" y="0" width="1600" height="44.500" fill="#333"/>
<rect x="0" y="44" width="1600" height="1" fill="#111"/>
<!-- logo -->
<g fill="#111"><circle cx="18" cy="24" r="9.500"/><circle cx="32" cy="18" r="13.500"/><circle cx="46" cy="22.500" r="11.500"/><rect x="18" y="20" width="28" height="13.500"/></g>
<g fill="#fff"><circle cx="18" cy="24" r="8.500"/><circle cx="32" cy="18" r="12.500"/><circle cx="46" cy="22.500" r="10.500"/><rect x="18" y="20" width="28" height="12.500"/></g>
<g fill="#2a8fd0"><circle cx="18" cy="24" r="6.800"/><circle cx="32" cy="18" r="10.800"/><circle cx="46" cy="22.500" r="8.800"/><rect x="18" y="20" width="28" height="10.800"/></g>
<path d="M12 24h42M32 8v23M20 30l12-22 12 22M24 12l22 18M40 12L18 30" stroke="#fff" stroke-width=".9" fill="none"/>
<path d="M24 14h11l3 5-3 3 4 8.500H24z" fill="#2f2f2f"/>
<text x="61" y="24" style="font-size:18px;fill:#e8e8e8" textLength="66" lengthAdjust="spacingAndGlyphs">RackN</text>
<text x="79" y="32.500" style="font-size:10px;font-weight:bold;fill:#ddd" textLength="29" lengthAdjust="spacingAndGlyphs">Portal</text>
<!-- search -->
<rect x="646" y="4.500" width="204" height="34.500" rx="17.250" fill="#fff"/>
<text x="660" y="26.500" style="fill:#bdbdbd" textLength="142" lengthAdjust="spacingAndGlyphs">Search Portal (CTRL+K)</text>
<use href="#sea" x="825" y="14.500" width="14" height="14" color="#777"/>
<!-- right header buttons -->
<rect x="1394" y="4" width="37" height="35" rx="3" fill="#db2828"/>
<use href="#fl" x="1405" y="14" width="15" height="15" color="#fff"/>
<rect x="1436" y="4" width="119" height="35" rx="3" fill="#1c7cc9"/>
<path d="M1520 4h32a3 3 0 0 1 3 3v29a3 3 0 0 1-3 3h-32z" fill="#1a74bd"/>
<text x="1457" y="27" style="font-weight:bold;fill:#fff" textLength="42" lengthAdjust="spacingAndGlyphs">zehicle</text>
<use href="#usr" x="1530" y="13" width="15" height="15" color="#fff"/>
<rect x="1558.500" y="4" width="38.500" height="35" rx="3" fill="#e0e1e2" stroke="#222" stroke-width=".5"/>
<use href="#out" x="1570" y="15" width="14" height="14" color="#666"/>
</svg>
</body></html>
